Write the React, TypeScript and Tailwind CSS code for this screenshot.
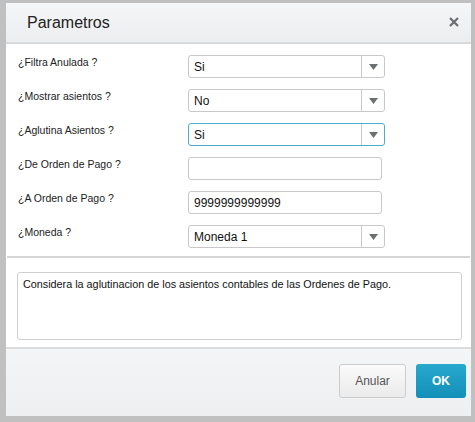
import React from "react";

const font = { fontFamily: '"Liberation Sans", Arial, sans-serif' };

function Select({ value, focused }: { value: string; focused?: boolean }) {
  return (
    <div
      className={`flex h-[23px] w-[197px] items-center rounded-[3px] border bg-white ${
        focused ? "border-[#4aaed0]" : "border-[#c8c8c8]"
      }`}
    >
      <div className="flex-1 pl-[5px] text-[12px] leading-none text-[#111]">{value}</div>
      <div className="flex h-full w-[23px] items-center justify-center border-l border-[#c8c8c8]">
        <svg width="9" height="6" viewBox="0 0 9 6">
          <path d="M0 0 H9 L4.5 6 Z" fill="#6b6e72" />
        </svg>
      </div>
    </div>
  );
}

function Input({ value }: { value: string }) {
  return (
    <div className="flex h-[23px] w-[194px] items-center rounded-[3px] border border-[#c8c8c8] bg-white pl-[5px] text-[12px] leading-none text-[#111]">
      {value}
    </div>
  );
}

export default function App() {
  const rows: { label: string; el: React.ReactNode }[] = [
    { label: "¿Filtra Anulada ?", el: <Select value="Si" /> },
    { label: "¿Mostrar asientos ?", el: <Select value="No" /> },
    { label: "¿Aglutina Asientos ?", el: <Select value="Si" focused /> },
    { label: "¿De Orden de Pago ?", el: <Input value="" /> },
    { label: "¿A Orden de Pago ?", el: <Input value="9999999999999" /> },
    { label: "¿Moneda ?", el: <Select value="Moneda 1" /> },
  ];
  return (
    <div className="h-[422px] w-[475px] bg-[#c0c0c0] pl-[6px] pt-[3px]" style={font}>
      <div className="flex h-[413px] w-[465px] flex-col bg-white">
        <div className="flex h-[41px] items-center justify-between border-b-2 border-[#d8d9da] bg-gradient-to-b from-[#f5f6f7] to-[#ecedee] pl-[21px] pr-[12px]">
          <span className="text-[16px] leading-none text-[#222]">Parametros</span>
          <svg width="10" height="10" viewBox="0 0 10 10" className="mb-[2px]">
            <path d="M1 1 L9 9 M9 1 L1 9" stroke="#6a6e74" strokeWidth="2.2" />
          </svg>
        </div>
        <div className="mx-[1px] flex flex-col gap-[11px] border-b-2 border-[#d6d6d6] pb-[8px] pl-[11px] pt-[11px]">
          {rows.map((r) => (
            <div key={r.label} className="flex items-start">
              <div className="w-[170px] pt-[1px] text-[10.5px] leading-[13px] text-[#222]">{r.label}</div>
              {r.el}
            </div>
          ))}
        </div>
        <div className="pl-[11px] pr-[9px] pt-[14px]">
          <div className="h-[68px] rounded-[3px] border border-[#cfcfcf] px-[5px] pt-[5px] text-[10.8px] leading-[13px] text-[#111]">
            Considera la aglutinacion de los asientos contables de las Ordenes de Pago.
          </div>
        </div>
        <div className="mt-[7px] flex flex-1 items-start justify-end gap-[10px] border-t-2 border-[#dcdcdc] bg-gradient-to-b from-[#f4f5f6] to-[#eeeff1] pr-[5px] pt-[15px]">
          <button className="h-[34px] w-[67px] rounded-[3px] border border-[#cccccc] bg-gradient-to-b from-[#fafafa] to-[#ebebeb] text-[12px] text-[#555]">
            Anular
          </button>
          <button className="h-[34px] w-[50px] rounded-[3px] bg-gradient-to-b from-[#27a8cd] to-[#1290b8] text-[12px] font-bold text-white">
            OK
          </button>
        </div>
      </div>
    </div>
  );
}
